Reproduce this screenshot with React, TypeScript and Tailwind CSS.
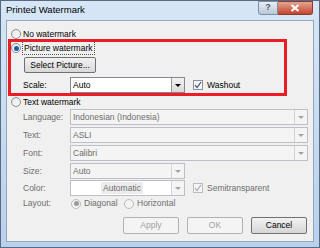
import React from "react";

const font = { fontFamily: '"Liberation Sans", Arial, sans-serif' };

function Radio({ checked, disabled }: { checked?: boolean; disabled?: boolean }) {
  return (
    <span
      className={`flex h-[10px] w-[10px] shrink-0 items-center justify-center rounded-full border ${
        disabled ? "border-[#b9bdc2] bg-[#f4f4f4]" : "border-[#8e8f8f] bg-gradient-to-br from-[#e6e6e6] to-[#fbfbfb]"
      }`}
    >
      {checked ? (
        <span className={`h-[5px] w-[5px] rounded-full ${disabled ? "bg-[#9a9a9a]" : "bg-[#1b5fa8]"}`} />
      ) : null}
    </span>
  );
}

function Check({ disabled }: { disabled?: boolean }) {
  return (
    <span
      className={`flex h-[10px] w-[10px] shrink-0 items-center justify-center border ${
        disabled ? "border-[#b9bdc2] bg-[#f4f4f4]" : "border-[#8e8f8f] bg-[#f4f6f8]"
      }`}
    >
      <svg width="8" height="8" viewBox="0 0 8 8">
        <path d="M1 4 L3 6.5 L7 1" fill="none" stroke={disabled ? "#a8a8a8" : "#2c4c8c"} strokeWidth="1.2" />
      </svg>
    </span>
  );
}

function Combo({
  value,
  wide,
  disabled,
  white,
  center,
}: {
  value: string;
  wide?: boolean;
  disabled?: boolean;
  white?: boolean;
  center?: boolean;
}) {
  return (
    <div
      className={`flex h-[16px] border ${wide ? "w-[238px]" : "w-[115px]"} ${
        disabled ? "border-[#bcc0c6]" : "border-[#828790]"
      } ${white || !disabled ? "bg-white" : "bg-[#f4f4f4]"}`}
    >
      <div
        className={`flex flex-1 items-center pl-[2px] text-[8.5px] leading-none ${
          disabled ? "text-[#6d6d6d]" : "text-black"
        } ${center ? "justify-center" : ""}`}
      >
        <span className={center ? "bg-[#ececec] px-[2px] py-[2px]" : ""}>{value}</span>
      </div>
      <div
        className={`flex w-[13px] items-center justify-center border-l ${
          disabled ? "border-[#d0d3d7] bg-[#f4f4f4]" : "border-[#9a9a9a] bg-gradient-to-b from-[#f2f2f2] to-[#d9d9d9]"
        }`}
      >
        <svg width="6" height="3" viewBox="0 0 6 3">
          <path d="M0 0 L6 0 L3 3 Z" fill={disabled ? "#a4a4a4" : "#000"} />
        </svg>
      </div>
    </div>
  );
}

function Row({ label, children, mt }: { label: string; children: React.ReactNode; mt: string }) {
  return (
    <div className={`flex h-[16px] items-center ${mt}`}>
      <span className="w-[63px] pl-[16px] text-[#6d6d6d]">{label}</span>
      {children}
    </div>
  );
}

function Button({ label, disabled }: { label: string; disabled?: boolean }) {
  return (
    <div
      className={`flex h-[17px] w-[56px] items-center justify-center rounded-[2px] border ${
        disabled
          ? "border-[#adb2b5] bg-[#f4f4f4] text-[#a0a0a0]"
          : "border-[#707070] bg-gradient-to-b from-[#f2f2f2] to-[#d6d6d6] text-black"
      }`}
    >
      {label}
    </div>
  );
}

export default function App() {
  return (
    <div
      style={font}
      className="relative h-[248px] w-[320px] overflow-hidden border border-[#5a6a7e] bg-gradient-to-b from-[#d6e6f7] to-[#b8d1ed]"
    >
      <div className="flex h-[19px] items-start justify-between">
        <span className="pl-[5px] pt-[4px] text-[9.5px] leading-none text-black">Printed Watermark</span>
        <div className="mr-[6px] flex h-[14px]">
          <div className="flex w-[20px] items-center justify-center rounded-bl-[3px] border border-[#7b8ea6] bg-gradient-to-b from-[#e9eef5] to-[#b9c7d8] text-[9px] font-bold text-[#4d5a6b]">
            ?
          </div>
          <div className="flex w-[35px] items-center justify-center rounded-br-[3px] border border-l-0 border-[#8a3a2e] bg-gradient-to-b from-[#e2a393] to-[#c4412a]">
            <svg width="10" height="8" viewBox="0 0 10 8">
              <path d="M1.5 1 L8.5 7 M8.5 1 L1.5 7" stroke="#fff" strokeWidth="2" />
            </svg>
          </div>
        </div>
      </div>

      <div className="mx-[5px] flex h-[222px] flex-col border border-[#97a7ba] bg-[#f0f0f0] text-[8.5px] leading-none text-black">
        <div className="mt-[6px] flex h-[14px] items-center gap-[2px] pl-[4px]">
          <Radio />
          <span>No watermark</span>
        </div>
        <div className="flex h-[14px] items-center gap-[1px] pl-[4px]">
          <Radio checked />
          <span className="border border-dotted border-[#555] px-[1px] py-[2px]">Picture watermark</span>
        </div>
        <div className="mt-[2px] flex pl-[17px]">
          <div className="flex h-[16px] w-[72px] items-center justify-center rounded-[2px] border border-[#707070] bg-gradient-to-b from-[#f2f2f2] to-[#d8d8d8]">
            Select Picture...
          </div>
        </div>
        <div className="mt-[4px] flex h-[16px] items-center">
          <span className="w-[63px] pl-[16px]">Scale:</span>
          <Combo value="Auto" />
          <div className="ml-[8px] flex items-center gap-[4px]">
            <Check />
            <span>Washout</span>
          </div>
        </div>
        <div className="mt-[2px] flex h-[14px] items-center gap-[2px] pl-[4px]">
          <Radio />
          <span>Text watermark</span>
        </div>
        <Row label="Language:" mt="">
          <Combo value="Indonesian (Indonesia)" wide disabled />
        </Row>
        <Row label="Text:" mt="mt-[2px]">
          <Combo value="ASLI" wide disabled />
        </Row>
        <Row label="Font:" mt="mt-[2px]">
          <Combo value="Calibri" wide disabled />
        </Row>
        <Row label="Size:" mt="mt-[2px]">
          <Combo value="Auto" disabled />
        </Row>
        <Row label="Color:" mt="mt-[1px]">
          <Combo value="Automatic" disabled white center />
          <div className="ml-[8px] flex items-center gap-[4px]">
            <Check disabled />
            <span className="text-[#6d6d6d]">Semitransparent</span>
          </div>
        </Row>
        <div className="flex h-[15px] items-center text-[#6d6d6d]">
          <span className="w-[64px] pl-[16px]">Layout:</span>
          <Radio checked disabled />
          <span className="ml-[3px] w-[40px]">Diagonal</span>
          <Radio disabled />
          <span className="ml-[3px]">Horizontal</span>
        </div>
        <div className="mt-[6px] flex items-center gap-[8px] pl-[116px]">
          <Button label="Apply" disabled />
          <Button label="OK" disabled />
          <Button label="Cancel" />
        </div>
      </div>

      <div className="pointer-events-none absolute left-[7px] top-[38px] h-[57px] w-[279px] border-[3px] border-[#ec1c24]" />
    </div>
  );
}
